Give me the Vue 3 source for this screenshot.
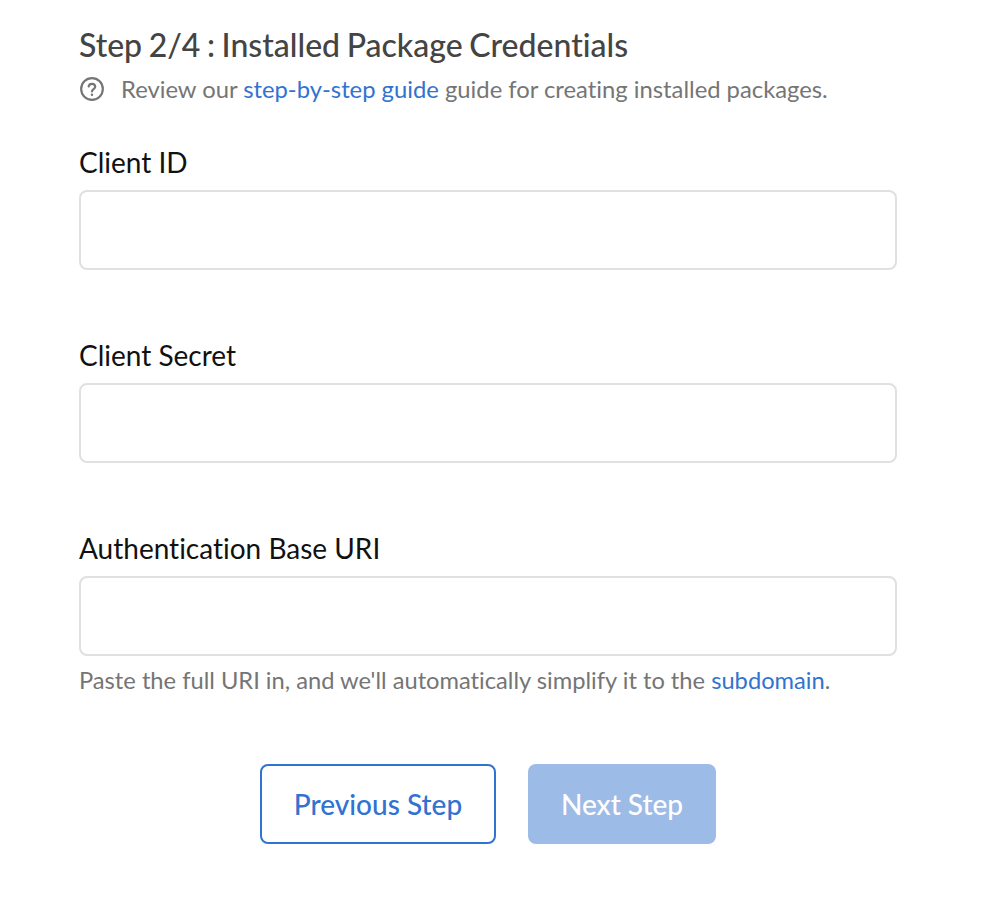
<template>
  <div class="page">
    <h2 class="step-title">Step 2/4 : Installed Package Credentials</h2>
    <p class="hint">
      <svg class="help-icon" width="24" height="24" viewBox="0 0 24 24" fill="none" stroke="#757575" stroke-width="2">
        <circle cx="12" cy="12" r="10" />
        <path d="M8.9 9.6a3.1 3.1 0 0 1 6.1.4c0 2-3 2.3-3 4.2" stroke-linecap="round" />
        <circle cx="12" cy="17.3" r="1.1" fill="#757575" stroke="none" />
      </svg>
      <span>Review our <a href="#">step-by-step guide</a> guide for creating installed packages.</span>
    </p>

    <div v-for="field in fields" :key="field.label" class="field">
      <label class="field-label">{{ field.label }}</label>
      <input class="field-input" type="text" />
      <p v-if="field.uri" class="field-note">
        Paste the full URI in, and we'll automatically simplify it to the <a href="#">subdomain</a>.
      </p>
    </div>

    <div class="actions">
      <button class="btn btn-outline">Previous Step</button>
      <button class="btn btn-disabled">Next Step</button>
    </div>
  </div>
</template>

<script setup>
const fields = [
  { label: 'Client ID' },
  { label: 'Client Secret' },
  { label: 'Authentication Base URI', uri: true },
]
</script>

<style>
body {
  background: #fff;
}
</style>

<style scoped>
.page {
  width: 818px;
  margin-left: 79px;
  padding-top: 26px;
  font-family: Lato, "Liberation Sans", sans-serif;
  font-variant-ligatures: none;
}

.step-title {
  margin: 0;
  font-size: 32px;
  line-height: 38px;
  font-weight: 500;
  word-spacing: -1.5px;
  color: #444;
}

.hint {
  display: flex;
  align-items: center;
  gap: 16px;
  margin: 7px 0 0;
  height: 36px;
  font-size: 23.8px;
  color: #757575;
}

.help-icon {
  flex: none;
  width: 26px;
  height: 26px;
}

a {
  color: #3173d0;
  text-decoration: none;
}

.field {
  margin-top: 37px;
}

.field + .field {
  margin-top: 67px;
}

.field-label {
  display: block;
  font-size: 28px;
  line-height: 36px;
  color: #111;
}

.field-input {
  display: block;
  box-sizing: border-box;
  width: 100%;
  height: 80px;
  margin-top: 10px;
  border: 2px solid #e0e0e0;
  border-radius: 8px;
  background: #fff;
}

.field-note {
  margin: 6px 0 0;
  font-size: 23.7px;
  line-height: 36px;
  color: #757575;
}

.actions {
  display: flex;
  justify-content: center;
  gap: 32px;
  margin-top: 66px;
}

.btn {
  box-sizing: border-box;
  height: 80px;
  border-radius: 8px;
  font-family: inherit;
  font-size: 28px;
  font-weight: 500;
}

.btn-outline {
  width: 236px;
  border: 2px solid #3173d0;
  background: #fff;
  color: #3173d0;
}

.btn-disabled {
  width: 188px;
  border: none;
  background: #9dbbe7;
  color: #fff;
}
</style>
